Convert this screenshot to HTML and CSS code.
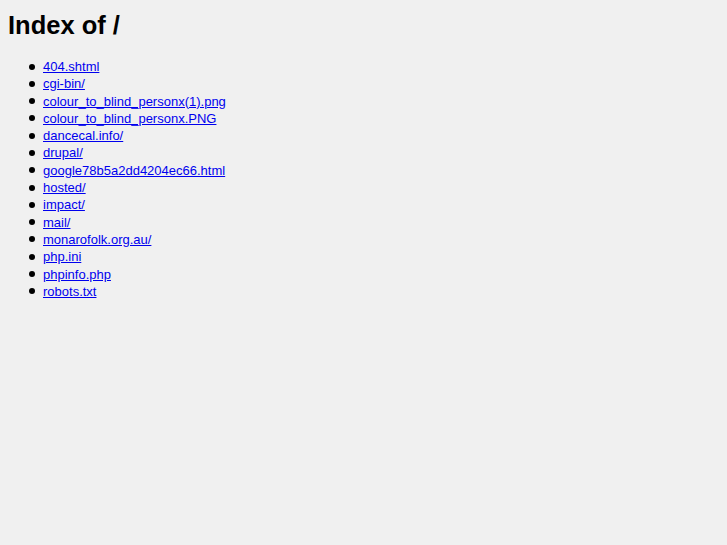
FILE: index.html
```html
<!DOCTYPE html>
<html>
<head>
<meta charset="utf-8">
<title>Index of /</title>
<link rel="stylesheet" href="styles.css">
</head>
<body class="page">
<h1 class="title">Index of /</h1>
<ul class="listing">
<li><a href="#">404.shtml</a></li>
<li><a href="#">cgi-bin/</a></li>
<li><a href="#">colour_to_blind_personx(1).png</a></li>
<li><a href="#">colour_to_blind_personx.PNG</a></li>
<li><a href="#">dancecal.info/</a></li>
<li><a href="#">drupal/</a></li>
<li><a href="#">google78b5a2dd4204ec66.html</a></li>
<li><a href="#">hosted/</a></li>
<li><a href="#">impact/</a></li>
<li><a href="#">mail/</a></li>
<li><a href="#">monarofolk.org.au/</a></li>
<li><a href="#">php.ini</a></li>
<li><a href="#">phpinfo.php</a></li>
<li><a href="#">robots.txt</a></li>
</ul>
</body>
</html>
```

FILE: styles.css
```css
html {
  background: #f0f0f0;
}
.page {
  margin: 8px;
  font-family: "Liberation Sans", Arial, sans-serif;
  font-size: 13px;
  color: #000;
  background: #f0f0f0;
}
.title {
  font-size: 25.5px;
  font-weight: bold;
  margin: 2px 0 18px 0;
  line-height: 30px;
}
.listing {
  margin: 0;
  padding-left: 35px;
  line-height: 17.3px;
  list-style: none;
}
.listing li::before {
  content: "";
  display: inline-block;
  width: 6px;
  height: 6px;
  border-radius: 50%;
  background: #000;
  margin-left: -14.5px;
  margin-right: 8.5px;
  vertical-align: 1.5px;
}
.listing a {
  color: #0000ee;
  text-decoration: underline;
}
```
